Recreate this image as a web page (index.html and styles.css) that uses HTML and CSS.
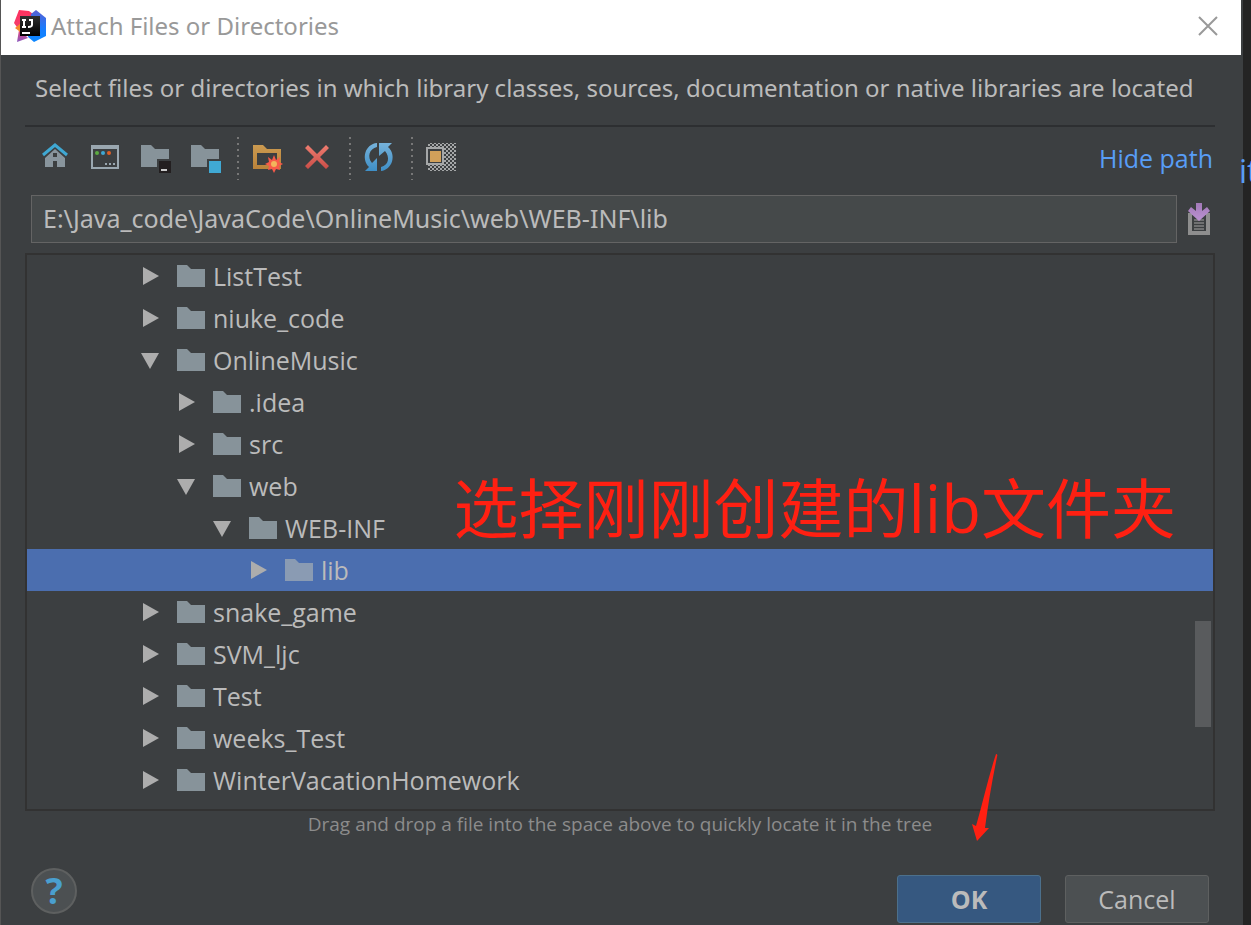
FILE: index.html
```html
<!DOCTYPE html>
<html lang="en">
<head>
<meta charset="utf-8">
<title>Attach Files or Directories</title>
<link rel="stylesheet" href="styles.css">
</head>
<body>
<svg class="defs" aria-hidden="true">
  <defs>
    <symbol id="folder" viewBox="0 0 28 22"><path d="M0 0H10L14 4H28V22H0Z" fill="currentColor"/></symbol>
    <symbol id="closed" viewBox="0 0 18 18"><path d="M1 0L17 9L1 18Z" fill="currentColor"/></symbol>
    <symbol id="open" viewBox="0 0 18 18"><path d="M-1 2H17L8 18Z" fill="currentColor"/></symbol>
    <linearGradient id="pink" x1="0" y1="0" x2="0" y2="1"><stop offset="0" stop-color="#fe315d"/><stop offset=".55" stop-color="#f43f6e"/><stop offset="1" stop-color="#8a5bc0"/></linearGradient>
    <linearGradient id="azure" x1="0" y1="0" x2="0" y2="1"><stop offset="0" stop-color="#5960d2"/><stop offset=".6" stop-color="#167dff"/><stop offset="1" stop-color="#0b87ff"/></linearGradient>
    <linearGradient id="gold" x1="0" y1="0" x2="0" y2="1"><stop offset="0" stop-color="#cb9a50"/><stop offset="1" stop-color="#b9823a"/></linearGradient>
    <linearGradient id="sky" x1="0" y1="0" x2="0" y2="1"><stop offset="0" stop-color="#76b2da"/><stop offset="1" stop-color="#3e8fc7"/></linearGradient>
    <linearGradient id="coral" x1="0" y1="0" x2="0" y2="1"><stop offset="0" stop-color="#ef7d70"/><stop offset="1" stop-color="#c94d47"/></linearGradient>
    <linearGradient id="violet" x1="0" y1="0" x2="0" y2="1"><stop offset="0" stop-color="#a279b8"/><stop offset="1" stop-color="#bb92d2"/></linearGradient>
    <linearGradient id="coal" x1="0" y1="0" x2="0" y2="1"><stop offset="0" stop-color="#303030"/><stop offset="1" stop-color="#000"/></linearGradient>
    <pattern id="checks" width="4" height="4" patternUnits="userSpaceOnUse"><path d="M0 0h2v2H0zM2 2h2v2H2z" fill="#a5a7a8"/></pattern>
  </defs>
</svg>
<div class="desktop">
  <main class="dialog">
    <header class="titlebar">
      <svg class="logo" viewBox="0 0 32 32" aria-hidden="true">
        <path d="M5 0L15 1L19 4L17 10L12 26L14 28L3 32L5 20L0 13Z" fill="url(#pink)"/>
        <path d="M1 18L7 13V24L5 21Z" fill="#f58a2c"/>
        <path d="M17 4L22 0L32 8V26L20 32L14 27Z" fill="url(#azure)"/>
        <path d="M6 6H26V26H6Z" fill="url(#coal)"/>
        <path d="M8 10H12M8 17H12M10 9V18M15 10H18V15Q18 17 14 17" fill="none" stroke="#fff" stroke-width="2"/>
        <path d="M8 22H16V24H8Z" fill="#fff"/>
      </svg>
      <h1 class="title">Attach Files or Directories</h1>
      <button class="close" type="button" aria-label="Close"><svg viewBox="0 0 20 20"><path d="M1 1L19 19M19 1L1 19" stroke="#999" stroke-width="2"/></svg></button>
    </header>
    <section class="content">
      <p class="description">Select files or directories in which library classes, sources, documentation or native libraries are located</p>
      <div class="toolbar">
        <button class="tool" type="button" aria-label="Home"><svg viewBox="0 0 50 44"><path d="M25 13L35 22V31H27V25H23V31H15V22ZM23 17V21H27V17Z" fill="#89959d" fill-rule="evenodd"/><path d="M13 19L25 9L37 19" fill="none" stroke="#3fa8d3" stroke-width="3"/></svg></button>
        <button class="tool" type="button" aria-label="Project directory"><svg viewBox="0 0 50 44"><path d="M11 9H39V33H11ZM13 13V31H37V13Z" fill="#9aa7b0" fill-rule="evenodd"/><circle cx="17" cy="17" r="2" fill="#5cab42"/><circle cx="23" cy="17" r="2" fill="#3fa8d3"/><circle cx="29" cy="17" r="2" fill="#e05f26"/><path d="M25 27h2v2h-2zM29 27h2v2h-2zM33 27h2v2h-2z" fill="#9aa7b0"/></svg></button>
        <button class="tool" type="button" aria-label="Module directory"><svg viewBox="0 0 50 44"><path d="M11 9H21L25 13H39V23H27V31H11Z" fill="#87939a"/><path d="M29 25H41V37H29Z" fill="#231f20"/><path d="M31 33H37V35H31Z" fill="#ccc"/></svg></button>
        <button class="tool" type="button" aria-label="Content root"><svg viewBox="0 0 50 44"><path d="M11 9H21L25 13H39V23H27V31H11Z" fill="#87939a"/><path d="M29 25H41V37H29Z" fill="#40a9d4"/></svg></button>
        <span class="separator"></span>
        <button class="tool" type="button" aria-label="New folder"><svg viewBox="0 0 50 44"><path d="M11 9H21L25 13H39V33H11ZM15 17V29H35V17Z" fill="url(#gold)" fill-rule="evenodd"/><path d="M32 19L34 24L38 21L37 26L41 28L37 30L38 34L34 33L32 37L30 33L26 34L27 30L23 28L27 26L26 21L30 24Z" fill="#f75a49"/><circle cx="32" cy="28" r="3" fill="#f2b55c"/></svg></button>
        <button class="tool" type="button" aria-label="Delete"><svg viewBox="0 0 50 44"><path d="M16 9L25 18L34 9L37 12L28 21L37 30L34 33L25 24L16 33L13 30L22 21L13 12Z" fill="url(#coral)"/></svg></button>
        <span class="separator"></span>
        <button class="tool" type="button" aria-label="Refresh"><svg viewBox="0 0 50 44"><path d="M23 7V11C15 13 13 21 18 27L23 22V35H11L15 31C7 23 11 8 23 7Z" fill="url(#sky)"/><path d="M25 7H38L34 11C43 19 38 34 27 35V31C35 29 36 21 31 15L25 20Z" fill="url(#sky)"/></svg></button>
        <span class="separator"></span>
        <button class="tool" type="button" aria-label="Show hidden files"><svg viewBox="0 0 50 44"><path d="M12 7H40V35H12Z" fill="url(#checks)"/><path d="M10 11H28V29H10Z" fill="#a5a7a8"/><path d="M12 13H26V27H12Z" fill="#3c3f41"/><path d="M14 15H25V26H14Z" fill="#d1a05a"/></svg></button>
        <a class="hide-path" href="#path">Hide path</a>
      </div>
      <div class="path-row">
        <input class="path" id="path" type="text" aria-label="Path" value="E:\Java_code\JavaCode\OnlineMusic\web\WEB-INF\lib">
        <button class="history" type="button" aria-label="Recent paths"><svg viewBox="0 0 24 34"><path d="M1 11H23V33H1ZM5 13V29H19V13Z" fill="#8e8e8e" fill-rule="evenodd"/><path d="M7 18H17M7 21H17M7 24H17M7 27H17" stroke="#a3a3a3"/><path d="M9 1H15V9L20 5L23 9L12 19L1 9L4 5L9 9Z" fill="url(#violet)"/></svg></button>
      </div>
      <div class="tree-frame">
        <ul class="tree" role="tree">
          <li class="row" role="treeitem"><svg class="arrow"><use href="#closed"/></svg><svg class="folder"><use href="#folder"/></svg>ListTest</li>
          <li class="row" role="treeitem"><svg class="arrow"><use href="#closed"/></svg><svg class="folder"><use href="#folder"/></svg>niuke_code</li>
          <li class="row" role="treeitem" aria-expanded="true"><svg class="arrow"><use href="#open"/></svg><svg class="folder"><use href="#folder"/></svg>OnlineMusic</li>
          <li class="row level-2" role="treeitem"><svg class="arrow"><use href="#closed"/></svg><svg class="folder"><use href="#folder"/></svg>.idea</li>
          <li class="row level-2" role="treeitem"><svg class="arrow"><use href="#closed"/></svg><svg class="folder"><use href="#folder"/></svg>src</li>
          <li class="row level-2" role="treeitem" aria-expanded="true"><svg class="arrow"><use href="#open"/></svg><svg class="folder"><use href="#folder"/></svg>web</li>
          <li class="row level-3" role="treeitem" aria-expanded="true"><svg class="arrow"><use href="#open"/></svg><svg class="folder"><use href="#folder"/></svg>WEB-INF</li>
          <li class="row level-4 selected" role="treeitem" aria-selected="true"><svg class="arrow"><use href="#closed"/></svg><svg class="folder"><use href="#folder"/></svg>lib</li>
          <li class="row" role="treeitem"><svg class="arrow"><use href="#closed"/></svg><svg class="folder"><use href="#folder"/></svg>snake_game</li>
          <li class="row" role="treeitem"><svg class="arrow"><use href="#closed"/></svg><svg class="folder"><use href="#folder"/></svg>SVM_ljc</li>
          <li class="row" role="treeitem"><svg class="arrow"><use href="#closed"/></svg><svg class="folder"><use href="#folder"/></svg>Test</li>
          <li class="row" role="treeitem"><svg class="arrow"><use href="#closed"/></svg><svg class="folder"><use href="#folder"/></svg>weeks_Test</li>
          <li class="row" role="treeitem"><svg class="arrow"><use href="#closed"/></svg><svg class="folder"><use href="#folder"/></svg>WinterVacationHomework</li>
        </ul>
        <span class="thumb"></span>
        <span class="note" lang="zh-CN">选择刚刚创建的lib文件夹</span>
        <svg class="pointer" viewBox="0 0 26 90" aria-hidden="true"><path d="M25 1Q27 1 26 4C21 28 17 52 14 75L18 75L6 88L1 71L5 73C12 49 17 25 25 1Z" fill="#ff2012"/></svg>
      </div>
      <p class="hint">Drag and drop a file into the space above to quickly locate it in the tree</p>
      <footer class="footer">
        <button class="help" type="button" aria-label="Help">?</button>
        <button class="action primary" type="button">OK</button>
        <button class="action" type="button">Cancel</button>
      </footer>
    </section>
  </main>
  <aside class="editor"><span class="code">it</span></aside>
</div>
</body>
</html>
```
FILE: styles.css
```css
* { box-sizing: border-box; }
body {
  margin: 0;
  background: #3c3f41;
  color: #bbb;
  font: 25px/42px "Open Sans", "Noto Sans", sans-serif;
}
button { padding: 0; border: 0; background: none; color: inherit; font: inherit; }
svg { display: block; flex: none; overflow: visible; }
symbol { overflow: visible; }
.defs { position: absolute; width: 0; height: 0; }
.desktop { display: flex; min-height: 100vh; overflow: hidden; }
.dialog { flex: 1; min-width: 0; border-left: 1px solid #555; }
.titlebar {
  display: flex;
  align-items: center;
  height: 55px;
  padding: 0 23px 4px 13px;
  margin-right: 2px;
  background: #fff;
  color: #999;
}
.logo { width: 32px; height: 32px; }
.title { flex: 1; margin: 0 0 0 5px; font: 400 24px/40px "Noto Sans", sans-serif; }
.close svg { width: 20px; height: 20px; }
.content { padding: 12px 28px 0 24px; }
.description {
  margin: 0;
  padding: 0 0 16px 10px;
  border-bottom: 2px solid #2d2f31;
  font: 24px/42px "Noto Sans", sans-serif;
  white-space: nowrap;
}
.toolbar { display: flex; align-items: center; padding: 9px 2px 0 5px; }
.tool svg { width: 50px; height: 44px; }
.separator {
  width: 2px;
  height: 44px;
  margin: 0 3px 0 7px;
  background: repeating-linear-gradient(transparent 0 1px, #777 1px 3px, transparent 3px 6px);
}
.hide-path { margin-left: auto; color: #589df6; text-decoration: none; }
.path-row { display: flex; align-items: center; gap: 10px; padding: 15px 4px 10px 6px; }
.path {
  flex: 1;
  min-width: 0;
  height: 48px;
  padding: 0 11px 3px;
  border: 1px solid #646464;
  background: #45494a;
  color: #bbb;
  font: 25px/42px "Noto Sans", sans-serif;
}
.history svg { width: 24px; height: 34px; }
.tree-frame { position: relative; border: 2px solid #323232; padding-bottom: 8px; }
.tree { margin: 0; padding: 0; list-style: none; }
.row { display: flex; align-items: center; height: 42px; padding-left: 115px; color: #bbb; line-height: 40px; }
.level-2 { padding-left: 151px; }
.level-3 { padding-left: 187px; }
.level-4 { padding-left: 223px; }
.selected { background: #4b6eaf; }
.arrow { width: 18px; height: 18px; margin-right: 17px; color: #adadad; }
.folder { width: 28px; height: 22px; margin-right: 8px; color: #87939a; }
.selected .folder { color: #8a9bb3; }
.thumb { position: absolute; top: 366px; right: 2px; width: 16px; height: 106px; background: #595b5d; }
.note {
  position: absolute;
  top: 208px;
  right: 37px;
  color: #ff2012;
  font: 65px/90px "Open Sans", "Noto Sans CJK SC", sans-serif;
  white-space: nowrap;
}
.pointer { position: absolute; top: 498px; right: 216px; width: 26px; height: 90px; }
.hint { margin: 0; color: #8c8c8c; font-size: 19px; line-height: 26px; text-align: center; }
.footer { display: flex; align-items: center; gap: 24px; padding: 31px 6px 2px; }
.help {
  width: 46px;
  height: 46px;
  margin: 0 auto 16px 0;
  border: 2px solid #5e6060;
  border-radius: 50%;
  background: #4c5052;
  color: #4a9fcf;
  font-size: 36px;
  font-weight: 700;
  line-height: 42px;
}
.action {
  width: 144px;
  height: 48px;
  border: 1px solid #5e6060;
  border-radius: 3px;
  background: #4c5052;
}
.primary { border-color: #4c708c; background: #365880; font-weight: 700; }
.editor {
  width: 8px;
  padding-top: 150px;
  background: #242424;
  color: #589df6;
}
.code { margin-left: -4px; font-size: 32px; }
```
